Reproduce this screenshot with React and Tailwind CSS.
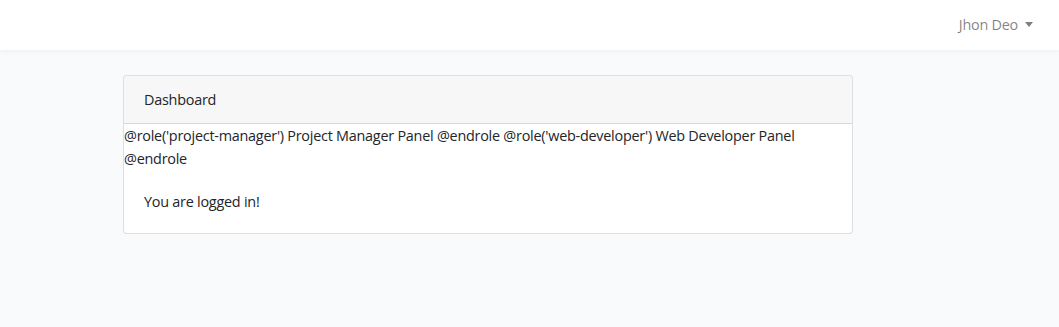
export default function App() {
  return (
    <div className="min-h-[327px] bg-[#f8fafc] text-[14.4px] leading-[1.6] tracking-[-0.24px] text-[#212529]" style={{ fontFamily: '"Open Sans", sans-serif' }}>
      <nav className="h-[50px] bg-white shadow-[0_2px_4px_rgba(0,0,0,0.04)] flex items-center justify-end pr-[26px]">
        <button className="flex items-center text-[rgba(0,0,0,0.5)]">
          <span>Jhon Deo</span>
          <span className="ml-[7px] inline-block w-0 h-0 border-l-[4.5px] border-r-[4.5px] border-t-[5px] border-l-transparent border-r-transparent border-t-[rgba(0,0,0,0.5)]"></span>
        </button>
      </nav>
      <main className="pt-[25px]">
        <div className="ml-[123px] w-[730px] bg-white border border-[rgba(0,0,0,0.125)] rounded-[4px]">
          <div className="bg-[rgba(0,0,0,0.03)] border-b border-[rgba(0,0,0,0.125)] px-[20px] py-[12px] rounded-t-[4px]">Dashboard</div>
          <div>@role('project-manager') Project Manager Panel @endrole @role('web-developer') Web Developer Panel @endrole</div>
          <div className="p-[20px]">You are logged in!</div>
        </div>
      </main>
    </div>
  );
}
